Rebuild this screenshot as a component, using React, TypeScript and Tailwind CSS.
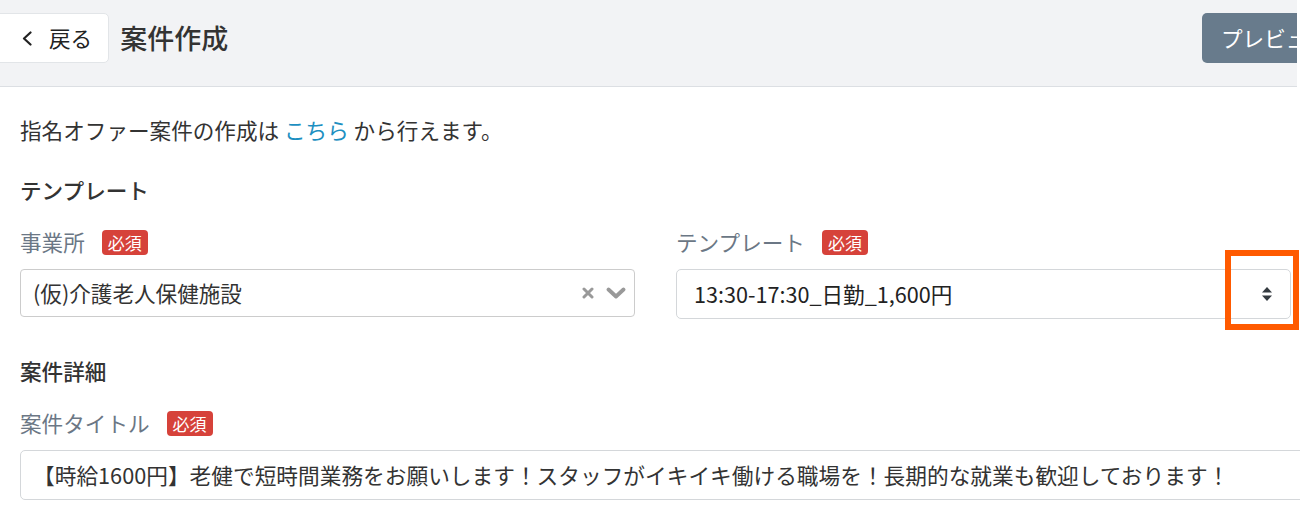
import { ReactNode } from 'react';

function Required() {
  return (
    <span className="ml-[17px] inline-flex h-[25px] items-center rounded-[4px] bg-[#d6423a] px-[6px] text-[17px] leading-none text-white">
      必須
    </span>
  );
}

function FieldLabel({ children }: { children: ReactNode }) {
  return (
    <div className="mb-[11px] flex h-[32px] items-center text-[21.6px] text-[#6b7785]">
      <span>{children}</span>
      <Required />
    </div>
  );
}

function ChevronLeft() {
  return (
    <svg width="12" height="15" viewBox="0 0 12 15" fill="none" stroke="#222" strokeWidth="2.2" strokeLinecap="round" strokeLinejoin="round">
      <path d="M9.5 1.5 3 7.5l6.5 6" />
    </svg>
  );
}

function ClearIcon() {
  return (
    <svg width="12" height="12" viewBox="0 0 12 12" stroke="#999" strokeWidth="3" strokeLinecap="round">
      <path d="M2 2l8 8M10 2l-8 8" />
    </svg>
  );
}

function ChevronDown() {
  return (
    <svg width="20" height="12" viewBox="0 0 20 12" fill="none" stroke="#999" strokeWidth="3.8" strokeLinecap="round" strokeLinejoin="round">
      <path d="M2.5 2.5 10 9.5l7.5-7" />
    </svg>
  );
}

function UpDown() {
  return (
    <svg width="10" height="14" viewBox="0 0 10 14" fill="#343a40">
      <polygon points="5,0 10,5.5 0,5.5" />
      <polygon points="0,8.5 10,8.5 5,14" />
    </svg>
  );
}

export default function App() {
  return (
    <div className="relative h-[508px] w-[1300px] overflow-hidden bg-white font-['Noto_Sans_CJK_JP',sans-serif] text-[#333]">
      {/* Header */}
      <header className="h-[87px] w-[1297px] overflow-hidden border-b border-[#dcdfe3] bg-[#f2f3f5] pt-[13px]">
        <div className="flex w-[1360px] items-center justify-between pr-[12px]">
          <div className="flex items-center">
            <button className="-ml-[7px] flex h-[50px] items-center gap-[16px] rounded-[5px] border border-[#e2e5e8] bg-white pl-[27px] pr-[16px] text-[21.6px] text-[#222]">
              <ChevronLeft />
              <span>戻る</span>
            </button>
            <h1 className="ml-[11px] text-[27px] font-medium text-[#333]">案件作成</h1>
          </div>
          <button className="flex h-[50px] shrink-0 items-center rounded-[5px] bg-[#687b8c] px-[19px] text-[21.6px] text-white">
            プレビュー
          </button>
        </div>
      </header>

      {/* Body */}
      <main className="px-[20px] pt-[27px]">
        <p className="text-[21.6px] leading-[32px] text-[#333]">
          指名オファー案件の作成は <a className="text-[#1d8fc1]">こちら</a> から行えます。
        </p>

        <h2 className="mt-[28px] text-[21.6px] font-medium leading-[32px] text-[#333]">テンプレート</h2>

        <div className="mt-[20px] grid w-[1271px] grid-cols-2 gap-x-[41px]">
          <div>
            <FieldLabel>事業所</FieldLabel>
            <div className="flex h-[48px] items-center rounded-[4px] border border-[#cccccc] pl-[12px] pr-[8px]">
              <span className="flex-1 text-[21.6px] text-[#333]">(仮)介護老人保健施設</span>
              <div className="flex items-center gap-[12px]">
                <ClearIcon />
                <ChevronDown />
              </div>
            </div>
          </div>
          <div>
            <FieldLabel>テンプレート</FieldLabel>
            <div className="flex h-[50px] items-center rounded-[5px] border border-[#d4d7da] pl-[17px] pr-[18px]">
              <span className="flex-1 text-[21.6px] text-[#222]">13:30-17:30_日勤_1,600円</span>
              <UpDown />
            </div>
          </div>
        </div>

        <h2 className="mt-[36px] text-[21.6px] font-medium leading-[32px] text-[#333]">案件詳細</h2>

        <div className="mt-[20px]">
          <FieldLabel>案件タイトル</FieldLabel>
          <div className="flex h-[50px] w-[1320px] items-center rounded-[5px] border border-[#d4d7da] pl-[12px]">
            <span className="text-[21.7px] text-[#333]">
              【時給1600円】老健で短時間業務をお願いします！スタッフがイキイキ働ける職場を！長期的な就業も歓迎しております！
            </span>
          </div>
        </div>
      </main>

      {/* annotation highlight */}
      <div className="absolute left-[1225px] top-[250px] h-[80px] w-[74px] border-[6px] border-[#ff5a00]" />
    </div>
  );
}
